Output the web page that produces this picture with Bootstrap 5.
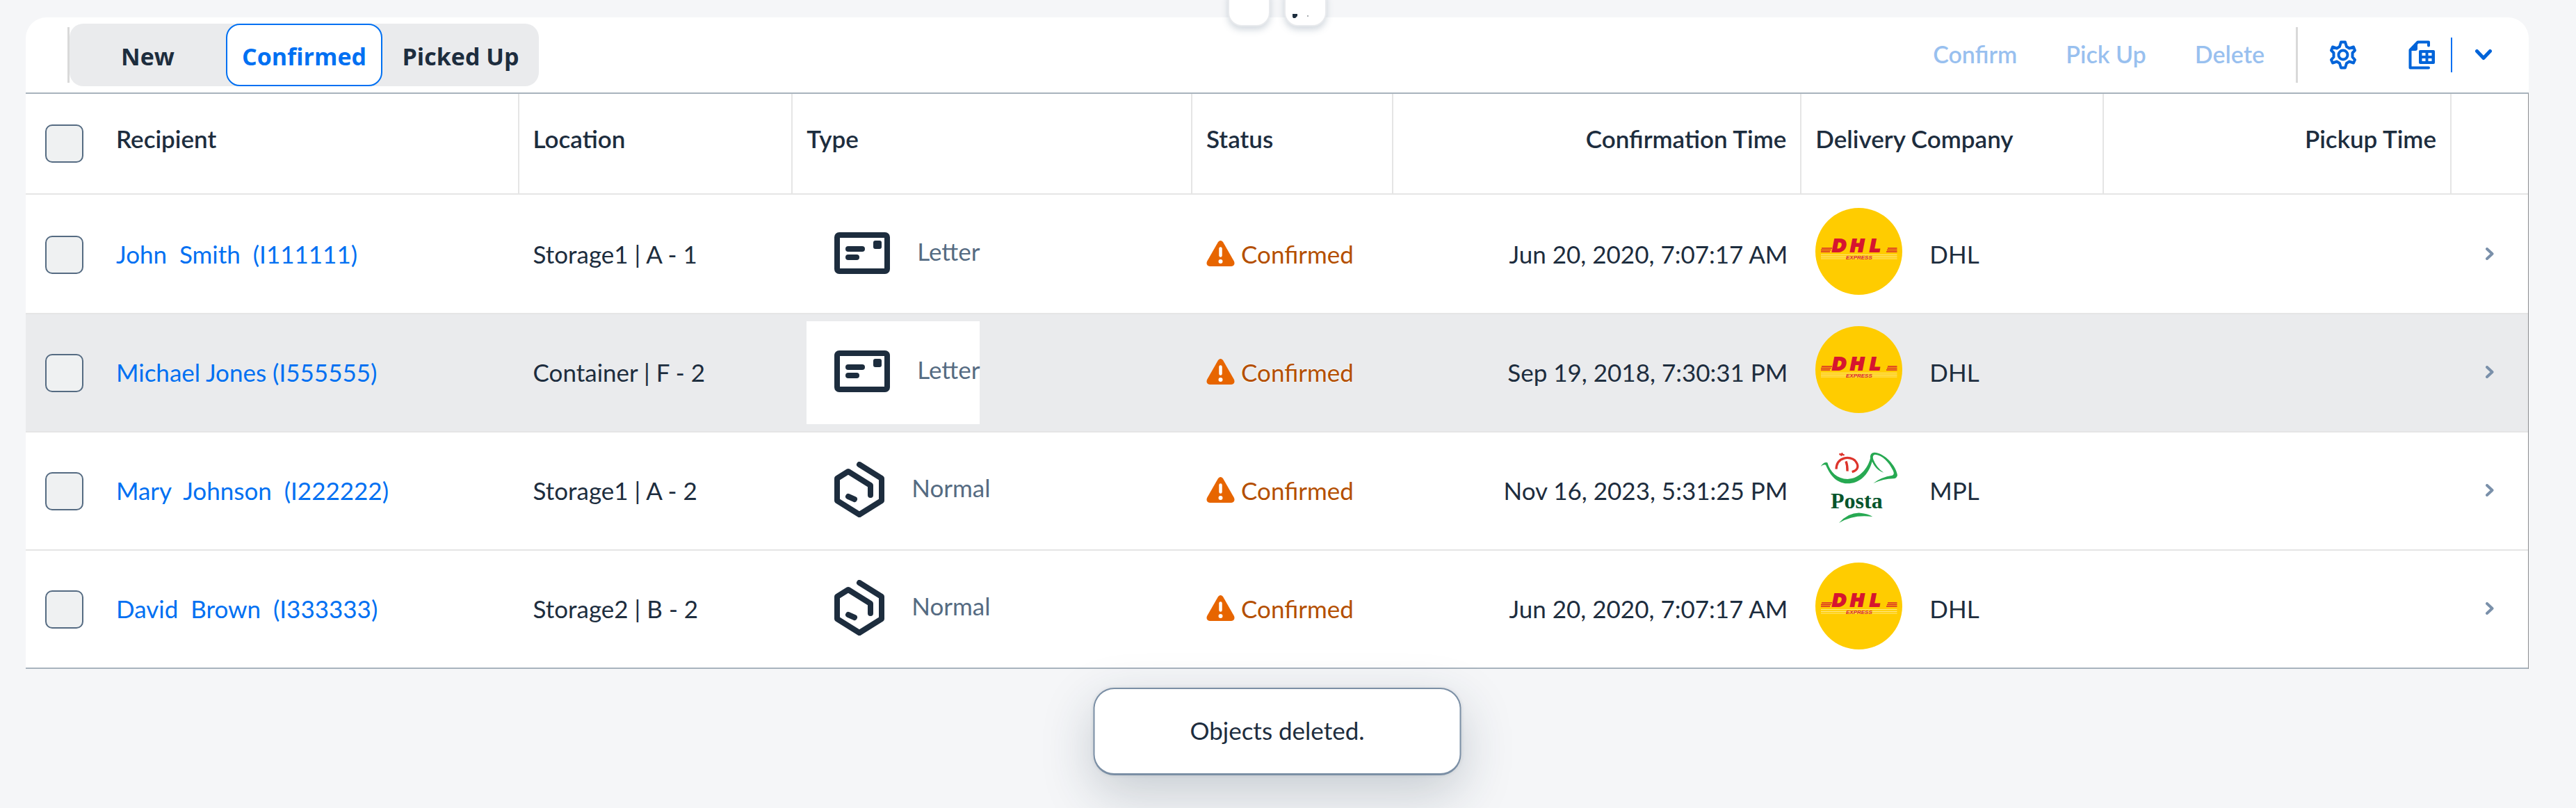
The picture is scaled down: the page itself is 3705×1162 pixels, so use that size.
<!DOCTYPE html>
<html lang="en">
<head>
<meta charset="utf-8">
<meta name="viewport" content="width=device-width, initial-scale=1">
<title>Packages</title>
<link href="https://cdn.jsdelivr.net/npm/bootstrap@5.3.0/dist/css/bootstrap.min.css" rel="stylesheet">
<style>
  body { background: #f5f6f8; color: #1d2d3e; font-family: Lato, "Open Sans", sans-serif; font-size: 35px; line-height: 42px; overflow: hidden; min-height: 100vh; }
  .page-area { padding: 25px 68px 0 37px; min-height: 100vh; }
  .panel { background: #fff; border-radius: 30px 30px 0 0; }
  .tool-row { height: 108px; padding-right: 20px; padding-left: 60px; }
  .tool-rule { width: 3px; height: 80px; background: #d9d9d9; }
  .segments { height: 90px; border-radius: 20px; background: #eaebed; font-family: "Open Sans", sans-serif; font-size: 34px; font-weight: 700; }
  .segments .btn { width: 225px; padding: 4px 0 0; border: 2px solid transparent; border-radius: 20px; font: inherit; color: #1d2d3e; }
  .segments .btn.active { background: #fff; border-color: #0070f2; color: #0070f2; }
  .tools { gap: 20px; }
  .tools .btn { border: 0; height: 90px; color: #0064d9; font-size: 34px; line-height: 42px; font-weight: 600; padding: 0 25px 3px; white-space: nowrap; }
  .tools .btn:disabled { opacity: .4; color: #0064d9; }
  .tools .btn.icon-btn { width: 90px; padding: 0; }
  .tools .btn.export-btn { padding-left: 6px; }
  .split-rule { width: 2px; height: 50px; background: #0070f2; }
  .parcels { table-layout: fixed; border-collapse: separate; border-spacing: 0; border-top: 2px solid #a8b3bd; border-right: 1px solid #8b8d90; }
  .parcels th, .parcels td { padding: 0 20px; vertical-align: middle; white-space: nowrap; border-bottom: 2px solid #e5e5e5; }
  .parcels th { height: 145px; font-weight: 600; padding-bottom: 16px; border-right: 2px solid #e5e5e5; }
  .parcels th.check-cell { padding-bottom: 0; }
  .parcels th.check-cell, .parcels th:last-child { border-right: 0; }
  .parcels td { height: 170px; padding-bottom: 3px; }
  .parcels td.kind-cell { padding-bottom: 0; }
  .parcels tbody tr:first-child td { height: 172px; padding-top: 2px; }
  .parcels tbody tr:last-child td { border-bottom-color: #a8b3bd; }
  .parcels tr.hovered td { background: #eaebed; }
  .parcels .check-cell { padding: 0 0 0 28px; }
  .c-check { width: 110px; } .c-place { width: 10.94%; } .c-type { width: 15.97%; } .c-status { width: 8.03%; }
  .c-time { width: 16.32%; } .c-company { width: 12.08%; } .c-pickup { width: 13.89%; } .c-nav { width: 110px; }
  .form-check-input.box { width: 55px; height: 55px; margin: 0; border: 2px solid #556b82; border-radius: 10px; background-color: #eff1f2; display: block; float: none; }
  .person { color: #0070f2; text-decoration: none; white-space: pre; }
  .kind { height: 148px; padding: 0 0 4px 40px; gap: 39px; background: #fff; color: #556b82; }
  .kind span { padding-bottom: 6px; }
  .kind svg { color: #1d2d3e; }
  .state { gap: 9px; color: #b44f00; text-shadow: 0 0 3px #fff; }
  .carrier { gap: 39px; }
  .carrier svg { margin-bottom: 6px; }
  .dhl-word { font: italic 700 25px "DejaVu Sans", sans-serif; fill: #d6152f; stroke: #d6152f; stroke-width: 2px; }
  .dhl-sub { font: italic 700 8px "Liberation Sans", sans-serif; fill: #d8232a; }
  .posta-word { font: 700 32px "Liberation Serif", serif; fill: #07552c; }
  .message { position: absolute; bottom: 47px; left: 50%; transform: translateX(-50%); width: 529px; height: 126px; padding-bottom: 3px; background: #fff; border: 2px solid #7b8fa5; border-bottom-width: 3px; border-radius: 30px; box-shadow: 0 0 5px rgba(34,53,72,.1), 0 25px 75px rgba(34,53,72,.22); }
  .message-lane { position: absolute; bottom: 0; left: 37px; right: 68px; }
  .head-tools { position: absolute; top: -47px; left: 50%; transform: translateX(-50%); gap: 20px; }
  .head-tools .btn { width: 61px; height: 60px; padding: 0; background: #fff; border: 2px solid #e8eaed; border-radius: 20px; box-shadow: 0 5px 10px rgba(85,107,130,.25); }
</style>
</head>
<body>
<svg width="0" height="0" class="position-absolute" aria-hidden="true">
  <symbol id="i-letter" viewBox="0 0 80 60"><rect x="4" y="4" width="72" height="52" rx="3" fill="none" stroke="currentColor" stroke-width="8"/><g fill="currentColor"><rect x="16" y="20" width="28" height="8" rx="4"/><rect x="16" y="32" width="20" height="8" rx="4"/><rect x="56" y="12" width="12" height="12" rx="3"/></g></symbol>
  <symbol id="i-parcel" viewBox="0 0 72 80"><path d="M36 4 68 24V56L36 76 4 56V24L20 14 52 34V48M20 50 29 54" fill="none" stroke="currentColor" stroke-width="8" stroke-linecap="round" stroke-linejoin="round"/></symbol>
  <symbol id="i-alert" viewBox="0 0 41 37"><path d="M17 2Q20.500-2 24 2L40 30Q42 36 36 37H5Q-1 36 1 30Z" fill="#e76500"/><path d="M20.500 11.500V21.500" stroke="#fff" stroke-width="4.500" stroke-linecap="round"/><circle cx="20.500" cy="30" r="3" fill="#fff"/></symbol>
  <symbol id="i-next" viewBox="0 0 12 18"><path d="M2 2 9.500 9 2 16" fill="none" stroke="#7a90aa" stroke-width="4" stroke-linecap="round" stroke-linejoin="round"/></symbol>
  <symbol id="i-dhl" viewBox="0 0 125 125"><circle cx="62.500" cy="62.500" r="62.500" fill="#fc0"/><path d="M9 58H24M8 60.500H22.500M8 63H21M104 58H117.500M103 60.500H117.500M102 63H117.500" stroke="#d8232a" stroke-width="1.400"/><path d="M8 67.500H117.500M8 70.300H117.500M8 73H117.500" stroke="#ffe680" stroke-width="1.200"/></symbol>
  <symbol id="i-posta" viewBox="0 0 125 125"><g transform="scale(.3333) translate(-186 -57)"><g fill="#27a952"><path d="M209 153Q222 132 238 136C250 178 280 206 325 207C378 205 412 160 423 118Q420 94 440 92C485 94 535 150 540 190Q538 205 522 205Q480 206 436 225Q470 198 518 191Q528 188 522 172C505 135 475 103 444 101Q430 104 436 122Q450 158 481 179C455 170 440 152 431 131C415 190 375 226 325 226C270 224 245 180 231 146Q220 142 209 153Z"/><path d="M288 396Q330 350 380 353Q412 356 433 369Q350 358 288 396Z"/></g><g fill="none" stroke="#dd342c"><path d="M276 164C278 108 338 108 356 126C376 148 372 168 344 176" stroke-width="10"/><path d="M318 130Q325 148 324 173" stroke-width="10"/><path d="M289 99 311 103M303 94 296 107" stroke-width="7"/></g></g></symbol>
</svg>

<div class="page-area position-relative">
  <div class="position-relative">
    <div class="head-tools d-flex">
      <button class="btn" type="button" aria-label="Collapse header"></button>
      <button class="btn" type="button" aria-label="Pin header"><svg width="56" height="56" viewBox="0 0 56 56" class="d-block" aria-hidden="true"><path d="M10 40H17V43L14 46H11L10 44Z" fill="#1d2d3e"/><path d="M31 42h2v2h-2z" fill="#a9adb2"/></svg></button>
    </div>
  </div>

  <main class="panel">
    <div class="tool-row d-flex align-items-center justify-content-between">
      <div class="d-flex align-items-center">
        <div class="tool-rule"></div>
        <div class="segments d-flex" role="group" aria-label="Parcel state">
          <button class="btn" type="button">New</button>
          <button class="btn active" type="button" aria-pressed="true">Confirmed</button>
          <button class="btn" type="button">Picked Up</button>
        </div>
      </div>
      <div class="tools d-flex align-items-center">
        <button class="btn" type="button" disabled>Confirm</button>
        <button class="btn" type="button" disabled>Pick Up</button>
        <button class="btn" type="button" disabled>Delete</button>
        <div class="tool-rule"></div>
        <button class="btn icon-btn" type="button" aria-label="Settings"><svg width="38" height="42" viewBox="0 0 38 42" class="d-block mx-auto" fill="none" stroke="currentColor" stroke-width="4" stroke-linejoin="round" aria-hidden="true"><circle cx="19" cy="21" r="6.500"/><path d="M16 2.500H22L24 9 28 11.500 34 9.500 36 14.500 32.500 18V24L36 28 34 32.500 28 30.500 24 33 22 39.500H16L14 33 10 30.500 4 32.500 2 28 5.500 24V18L2 14.500 4 9.500 10 11.500 14 9Z"/></svg></button>
        <div class="d-flex align-items-center">
          <button class="btn icon-btn export-btn" type="button" aria-label="Export"><svg width="38" height="42" viewBox="0 0 38 42" class="d-block mx-auto" aria-hidden="true"><path d="M29 7.500V2.500H13.500L2.500 14V39.500H29" fill="none" stroke="currentColor" stroke-width="4" stroke-linecap="round" stroke-linejoin="round"/><path d="M13 2V12Q13 15 10 15H2L13 2Z" fill="currentColor"/><rect x="15" y="14" width="23" height="20" rx="2" fill="currentColor"/><path d="M19.500 18h5v4h-5zM28.500 18h5v4h-5zM19.500 26h5v4h-5zM28.500 26h5v4h-5z" fill="#fff"/></svg></button>
          <div class="split-rule"></div>
          <button class="btn icon-btn" type="button" aria-label="Export options"><svg width="24" height="16" viewBox="0 0 24 16" class="d-block mx-auto" aria-hidden="true"><path d="M2.500 2.500 12 12.500 21.500 2.500" fill="none" stroke="currentColor" stroke-width="5" stroke-linecap="round" stroke-linejoin="round"/></svg></button>
        </div>
      </div>
    </div>

    <table class="parcels w-100">
      <colgroup><col class="c-check"><col><col class="c-place"><col class="c-type"><col class="c-status"><col class="c-time"><col class="c-company"><col class="c-pickup"><col class="c-nav"></colgroup>
      <thead>
        <tr>
          <th class="check-cell"><input class="form-check-input box" type="checkbox" aria-label="Select all"></th>
          <th scope="col">Recipient</th><th scope="col">Location</th><th scope="col">Type</th><th scope="col">Status</th>
          <th scope="col" class="text-end">Confirmation Time</th><th scope="col">Delivery Company</th><th scope="col" class="text-end">Pickup Time</th><th></th>
        </tr>
      </thead>
      <tbody>
        <tr>
          <td class="check-cell"><input class="form-check-input box" type="checkbox" aria-label="Select John Smith"></td>
          <td><a class="person" href="#">John  Smith  (I111111)</a></td>
          <td>Storage1 | A - 1</td>
          <td class="kind-cell"><div class="kind d-inline-flex align-items-center align-middle"><svg width="80" height="60" aria-hidden="true"><use href="#i-letter"/></svg><span>Letter</span></div></td>
          <td><div class="state d-flex align-items-center"><svg width="41" height="37" aria-hidden="true"><use href="#i-alert"/></svg>Confirmed</div></td>
          <td class="text-end">Jun 20, 2020, 7:07:17 AM</td>
          <td><div class="carrier d-flex align-items-center"><svg width="125" height="125" aria-hidden="true"><use href="#i-dhl"/><text class="dhl-word" x="24 50 78" y="63">DHL</text><text class="dhl-sub" x="44" y="74">EXPRESS</text></svg>DHL</div></td>
          <td></td>
          <td><svg width="12" height="18" class="d-block mx-auto" aria-hidden="true"><use href="#i-next"/></svg></td>
        </tr>
        <tr class="hovered">
          <td class="check-cell"><input class="form-check-input box" type="checkbox" aria-label="Select Michael Jones"></td>
          <td><a class="person" href="#">Michael Jones (I555555)</a></td>
          <td>Container | F - 2</td>
          <td class="kind-cell"><div class="kind d-inline-flex align-items-center align-middle"><svg width="80" height="60" aria-hidden="true"><use href="#i-letter"/></svg><span>Letter</span></div></td>
          <td><div class="state d-flex align-items-center"><svg width="41" height="37" aria-hidden="true"><use href="#i-alert"/></svg>Confirmed</div></td>
          <td class="text-end">Sep 19, 2018, 7:30:31 PM</td>
          <td><div class="carrier d-flex align-items-center"><svg width="125" height="125" aria-hidden="true"><use href="#i-dhl"/><text class="dhl-word" x="24 50 78" y="63">DHL</text><text class="dhl-sub" x="44" y="74">EXPRESS</text></svg>DHL</div></td>
          <td></td>
          <td><svg width="12" height="18" class="d-block mx-auto" aria-hidden="true"><use href="#i-next"/></svg></td>
        </tr>
        <tr>
          <td class="check-cell"><input class="form-check-input box" type="checkbox" aria-label="Select Mary Johnson"></td>
          <td><a class="person" href="#">Mary  Johnson  (I222222)</a></td>
          <td>Storage1 | A - 2</td>
          <td class="kind-cell"><div class="kind d-inline-flex align-items-center align-middle"><svg width="72" height="80" aria-hidden="true"><use href="#i-parcel"/></svg><span>Normal</span></div></td>
          <td><div class="state d-flex align-items-center"><svg width="41" height="37" aria-hidden="true"><use href="#i-alert"/></svg>Confirmed</div></td>
          <td class="text-end">Nov 16, 2023, 5:31:25 PM</td>
          <td><div class="carrier d-flex align-items-center"><svg width="125" height="125" aria-hidden="true"><use href="#i-posta"/><text class="posta-word" x="22" y="92">Posta</text></svg>MPL</div></td>
          <td></td>
          <td><svg width="12" height="18" class="d-block mx-auto" aria-hidden="true"><use href="#i-next"/></svg></td>
        </tr>
        <tr>
          <td class="check-cell"><input class="form-check-input box" type="checkbox" aria-label="Select David Brown"></td>
          <td><a class="person" href="#">David  Brown  (I333333)</a></td>
          <td>Storage2 | B - 2</td>
          <td class="kind-cell"><div class="kind d-inline-flex align-items-center align-middle"><svg width="72" height="80" aria-hidden="true"><use href="#i-parcel"/></svg><span>Normal</span></div></td>
          <td><div class="state d-flex align-items-center"><svg width="41" height="37" aria-hidden="true"><use href="#i-alert"/></svg>Confirmed</div></td>
          <td class="text-end">Jun 20, 2020, 7:07:17 AM</td>
          <td><div class="carrier d-flex align-items-center"><svg width="125" height="125" aria-hidden="true"><use href="#i-dhl"/><text class="dhl-word" x="24 50 78" y="63">DHL</text><text class="dhl-sub" x="44" y="74">EXPRESS</text></svg>DHL</div></td>
          <td></td>
          <td><svg width="12" height="18" class="d-block mx-auto" aria-hidden="true"><use href="#i-next"/></svg></td>
        </tr>
      </tbody>
    </table>
  </main>

  <div class="message-lane">
    <div class="message d-flex align-items-center justify-content-center" role="status">Objects deleted.</div>
  </div>
</div>
<script src="https://cdn.jsdelivr.net/npm/bootstrap@5.3.0/dist/js/bootstrap.bundle.min.js"></script>
</body>
</html>
